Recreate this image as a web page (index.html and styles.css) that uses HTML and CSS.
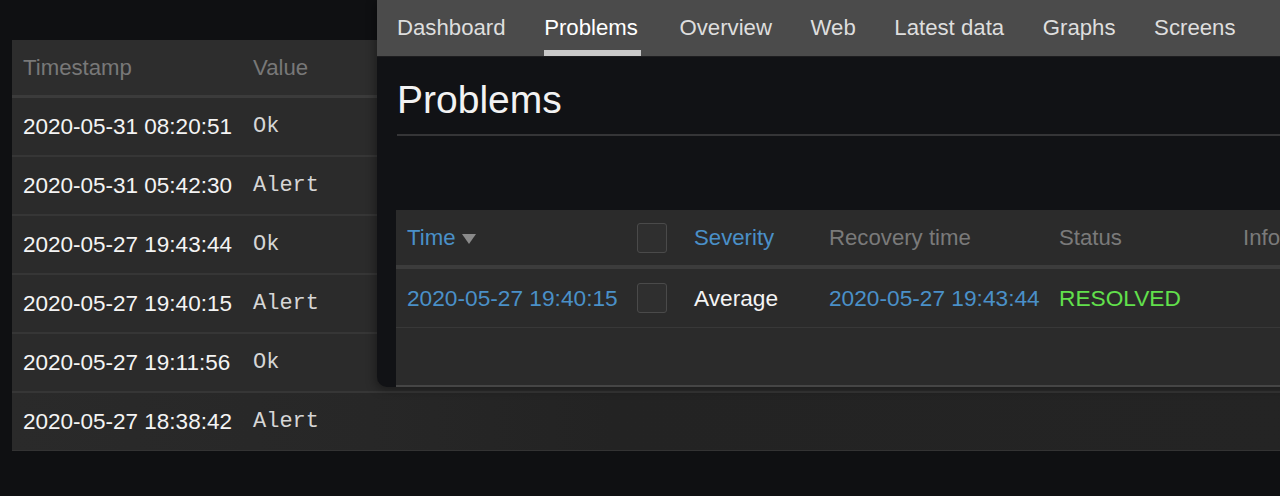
FILE: index.html
```html
<!DOCTYPE html>
<html lang="en">
<head>
<meta charset="utf-8">
<title>Problems</title>
<link rel="stylesheet" href="styles.css">
</head>
<body>
<div class="desk">
  <section class="history">
    <div class="hrow hhead">
      <div class="hcell">Timestamp</div>
      <div class="hcell">Value</div>
    </div>
    <div class="hrow"><div class="hcell ts">2020-05-31 08:20:51</div><div class="hcell val">Ok</div></div>
    <div class="hrow"><div class="hcell ts">2020-05-31 05:42:30</div><div class="hcell val">Alert</div></div>
    <div class="hrow"><div class="hcell ts">2020-05-27 19:43:44</div><div class="hcell val">Ok</div></div>
    <div class="hrow"><div class="hcell ts">2020-05-27 19:40:15</div><div class="hcell val">Alert</div></div>
    <div class="hrow"><div class="hcell ts">2020-05-27 19:11:56</div><div class="hcell val">Ok</div></div>
    <div class="hrow last"><div class="hcell ts">2020-05-27 18:38:42</div><div class="hcell val">Alert</div></div>
  </section>

  <section class="win">
    <nav class="nav">
      <a class="nav-item">Dashboard</a>
      <a class="nav-item active">Problems</a>
      <a class="nav-item">Overview</a>
      <a class="nav-item">Web</a>
      <a class="nav-item">Latest data</a>
      <a class="nav-item">Graphs</a>
      <a class="nav-item">Screens</a>
    </nav>
    <div class="content">
      <h1 class="title">Problems</h1>
      <div class="ptable">
        <div class="prow phead">
          <div class="pcell link">Time<svg class="sort" width="14" height="10" viewBox="0 0 14 10"><path d="M0 0 H14 L7 10 Z" fill="#8a8a8a"/></svg></div>
          <div class="pcell"><span class="chk"></span></div>
          <div class="pcell link">Severity</div>
          <div class="pcell">Recovery time</div>
          <div class="pcell">Status</div>
          <div class="pcell">Info</div>
        </div>
        <div class="prow pdata">
          <div class="pcell link">2020-05-27 19:40:15</div>
          <div class="pcell"><span class="chk"></span></div>
          <div class="pcell white">Average</div>
          <div class="pcell link">2020-05-27 19:43:44</div>
          <div class="pcell ok">RESOLVED</div>
          <div class="pcell"></div>
        </div>
        <div class="pempty"></div>
      </div>
    </div>
  </section>
</div>
</body>
</html>
```

FILE: styles.css
```css
* { box-sizing: border-box; }
html, body {
  margin: 0;
  padding: 0;
  background: #0f1012;
  font-family: "Liberation Sans", Arial, Helvetica, sans-serif;
}
.desk {
  position: relative;
  width: 1280px;
  height: 496px;
  overflow: hidden;
}

/* back panel */
.history {
  position: absolute;
  left: 12px;
  top: 40px;
  width: 1300px;
  background: #2b2b2b;
  border-bottom: 1px solid #333;
}
.hrow {
  display: grid;
  grid-template-columns: 230px 1fr;
  align-items: center;
  height: 59px;
  border-bottom: 2px solid #363636;
}
.hrow.last {
  height: 57px;
  border-bottom: none;
  background: linear-gradient(90deg, #2a2a2a 0, #272727 360px, #232323 600px, #242424 100%);
}
.hrow.hhead {
  height: 58px;
  border-bottom: 3px solid #3b3b3b;
  background: #2d2d2d;
}
.hcell {
  padding-left: 11px;
  font-size: 22.2px;
  color: #787878;
  white-space: nowrap;
}
.hcell.ts {
  font-size: 22.5px;
  color: #f4f4f4;
}
.hcell.val {
  font-family: "Liberation Mono", "Courier New", monospace;
  font-size: 22px;
  color: #d6d6d6;
  font-weight: normal;
}

/* front window */
.win {
  position: absolute;
  left: 377px;
  top: 0;
  width: 940px;
  height: 387px;
  background: #111215;
  border-bottom-left-radius: 10px;
  overflow: hidden;
  box-shadow: -2px 3px 10px rgba(0, 0, 0, 0.35);
}
.nav {
  display: flex;
  gap: 38.6px;
  height: 57px;
  padding-left: 20px;
  background: #4b4b4b;
  border-bottom: 1px solid #1d1d1f;
}
.nav-item {
  display: flex;
  align-items: center;
  height: 56px;
  font-size: 22.2px;
  color: #dedede;
  white-space: nowrap;
}
.nav-item.active {
  color: #ffffff;
  padding-right: 3px;
  box-shadow: inset 0 -6px 0 #c9c9c9;
}
.content {
  padding-left: 19px;
}
.title {
  margin: 20px 0 0 1px;
  padding-bottom: 11px;
  font-size: 39px;
  line-height: 46px;
  font-weight: normal;
  color: #f2f2f2;
  border-bottom: 2px solid #353537;
}
.ptable {
  margin-top: 74px;
  background: #2b2b2b;
  border-bottom: 2px solid #464646;
}
.prow {
  display: grid;
  grid-template-columns: 230px 57px 135px 230px 184px 1fr;
  align-items: center;
}
.phead {
  height: 59px;
  border-bottom: 4px solid #3c3c3c;
}
.pdata {
  height: 59px;
  border-bottom: 1px solid #383838;
}
.pempty {
  height: 57px;
}
.pcell {
  display: flex;
  align-items: center;
  padding-left: 11px;
  font-size: 22.2px;
  color: #7a7a7a;
  white-space: nowrap;
}
.pdata .pcell { font-size: 22.7px; }
.pcell.link { color: #4a90c8; }
.pcell.white { color: #f4f4f4; }
.pcell.ok { color: #62e04c; }
.sort {
  margin-left: 7px;
  margin-top: 2px;
}
.chk {
  display: block;
  width: 30px;
  height: 30px;
  border: 1px solid #4a4a4a;
  border-radius: 3px;
  background: #2f2f2f;
}
```
